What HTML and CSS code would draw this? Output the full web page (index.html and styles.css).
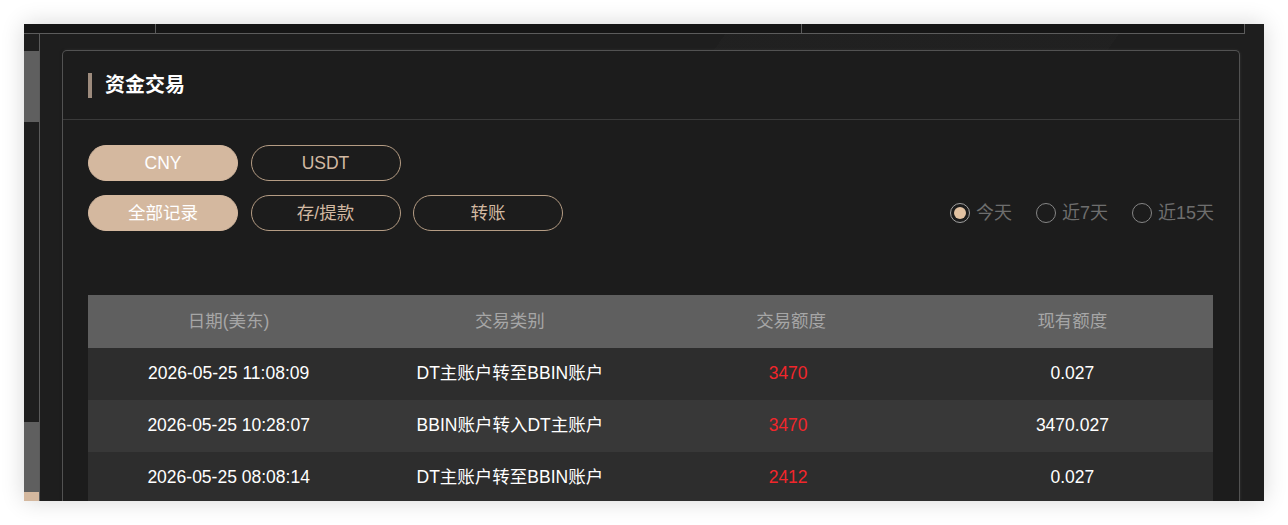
FILE: index.html
```html
<!DOCTYPE html>
<html lang="zh-CN">
<head>
<meta charset="utf-8">
<title>资金交易</title>
<link rel="stylesheet" href="styles.css">
</head>
<body>
<div class="frame">
  <div class="topbar">
    <div class="tb-cell c1"></div>
    <div class="tb-cell c2"></div>
    <div class="tb-cell c3"></div>
  </div>
  <div class="main">
    <aside class="sidebar">
      <div class="sb-item on first"></div>
      <div class="sb-item gap"></div>
      <div class="sb-item on last"></div>
      <div class="sb-item gold"></div>
    </aside>
    <section class="panel">
      <header class="panel-head">
        <span class="bar"></span>
        <h2 class="title">资金交易</h2>
      </header>
      <div class="panel-body">
        <div class="btn-row">
          <button class="btn active">CNY</button>
          <button class="btn">USDT</button>
        </div>
        <div class="filter-row">
          <div class="btn-row">
            <button class="btn active">全部记录</button>
            <button class="btn">存/提款</button>
            <button class="btn">转账</button>
          </div>
          <div class="radios">
            <label class="radio checked"><span class="circle"></span><span>今天</span></label>
            <label class="radio"><span class="circle"></span><span>近7天</span></label>
            <label class="radio"><span class="circle"></span><span>近15天</span></label>
          </div>
        </div>
        <table class="records">
          <thead>
            <tr><th>日期(美东)</th><th>交易类别</th><th>交易额度</th><th>现有额度</th></tr>
          </thead>
          <tbody>
            <tr><td>2026-05-25 11:08:09</td><td>DT主账户转至BBIN账户</td><td class="amt">3470</td><td>0.027</td></tr>
            <tr class="alt"><td>2026-05-25 10:28:07</td><td>BBIN账户转入DT主账户</td><td class="amt">3470</td><td>3470.027</td></tr>
            <tr><td>2026-05-25 08:08:14</td><td>DT主账户转至BBIN账户</td><td class="amt">2412</td><td>0.027</td></tr>
          </tbody>
        </table>
      </div>
    </section>
  </div>
</div>
</body>
</html>
```

FILE: styles.css
```css
* { box-sizing: border-box; }
html, body { margin: 0; padding: 0; background: #ffffff; }
body {
  font-family: "Liberation Sans", "Noto Sans CJK SC", sans-serif;
  width: 1288px;
  height: 525px;
  overflow: hidden;
}
.frame {
  margin: 24px;
  width: 1240px;
  height: 477px;
  overflow: hidden;
  background: #1e1e1e linear-gradient(125deg, rgba(255,255,255,0) 0 45%, rgba(255,255,255,0.012) 45% 70%, rgba(255,255,255,0) 70%);
  box-shadow: 0 0 22px rgba(0,0,0,0.16);
  display: flex;
  flex-direction: column;
}
.topbar {
  display: flex;
  height: 10px;
  flex: none;
}
.tb-cell {
  height: 10px;
  background: #161616;
  border-bottom: 1px solid #5c5c5c;
  border-right: 1px solid #5c5c5c;
}
.tb-cell.c1 { width: 132px; }
.tb-cell.c2 { width: 646px; }
.tb-cell.c3 { width: 443px; }
.main {
  display: flex;
  flex: 1;
  min-height: 0;
}
.sidebar {
  width: 16px;
  flex: none;
  padding-top: 17px;
  display: flex;
  flex-direction: column;
  border-right: 1px solid #5a5a5a;
}
.sb-item { flex: none; }
.sb-item.on { background: #5f5f5f; }
.sb-item.first { height: 71px; }
.sb-item.gap { height: 300px; }
.sb-item.last { height: 70px; }
.sb-item.gold { height: 30px; background: #d4b89f; }
.panel {
  margin: 16px 0 0 22px;
  width: 1178px;
  flex: none;
  background: #1c1c1c;
  border: 1px solid #525252;
  border-bottom: none;
  border-radius: 5px 5px 0 0;
  box-shadow: 0 0 3px rgba(255,255,255,0.12), -1px 0 2px rgba(0,0,0,0.5);
}
.panel-head {
  height: 69px;
  border-bottom: 1px solid #3a3a3a;
  display: flex;
  align-items: center;
  padding-left: 25px;
}
.bar {
  width: 4px;
  height: 25px;
  background: #9d8b7d;
  margin-right: 13px;
}
.title {
  margin: 0;
  font-size: 20px;
  line-height: 24px;
  font-weight: bold;
  color: #ffffff;
}
.panel-body {
  padding: 25px 25px 0 25px;
}
.btn-row {
  display: flex;
  gap: 12.5px;
}
.btn {
  width: 150px;
  height: 36px;
  border-radius: 18px;
  border: 1px solid #b59c84;
  background: transparent;
  color: #d2b9a2;
  font-family: "Liberation Sans", "Noto Sans CJK SC", sans-serif;
  font-size: 17.5px;
  line-height: 20px;
  padding: 0;
  cursor: pointer;
}
.btn.active {
  background: #d4b89f;
  border-color: #d4b89f;
  color: #ffffff;
}
.filter-row {
  margin-top: 14px;
  display: flex;
  justify-content: space-between;
  align-items: center;
}
.radios {
  display: flex;
  gap: 24px;
  align-items: center;
}
.radio {
  display: flex;
  align-items: center;
  gap: 6px;
  color: #6e6e6e;
  font-size: 18px;
  line-height: 22px;
}
.circle {
  width: 20px;
  height: 20px;
  border: 1.5px solid #858585;
  border-radius: 50%;
  display: flex;
  align-items: center;
  justify-content: center;
}
.radio.checked .circle { border-color: #a0a0a0; }
.radio.checked .circle::after {
  content: "";
  width: 12px;
  height: 12px;
  border-radius: 50%;
  background: #e2c2a2;
}
.records {
  margin-top: 64px;
  width: 1125px;
  border-collapse: collapse;
  table-layout: fixed;
}
.records th {
  height: 53px;
  background: #5f5f5f;
  color: #a6a6a6;
  font-weight: normal;
  font-size: 17.5px;
  line-height: 20px;
  text-align: center;
  padding: 0 0 2px 0;
}
.records td {
  height: 52px;
  background: #2d2d2d;
  color: #ffffff;
  font-size: 17.5px;
  line-height: 20px;
  text-align: center;
  padding: 0 0 2px 0;
}
.records tr.alt td { background: #383838; }
.records td.amt { color: #f2262b; padding-right: 6px; }
```
